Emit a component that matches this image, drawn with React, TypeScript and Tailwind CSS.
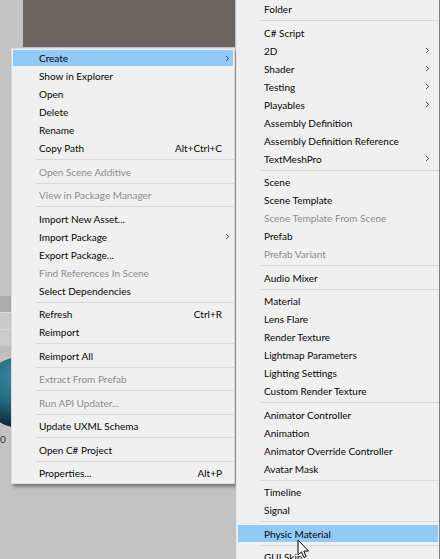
import { ChevronRight } from 'lucide-react';

type MenuEntry =
  | { kind: 'sep' }
  | {
      kind: 'item';
      label: string;
      shortcut?: string;
      sub?: boolean;
      disabled?: boolean;
      active?: boolean;
    };

const sep: MenuEntry = { kind: 'sep' };
const item = (label: string, opts: Partial<Omit<Extract<MenuEntry, { kind: 'item' }>, 'kind' | 'label'>> = {}): MenuEntry => ({
  kind: 'item',
  label,
  ...opts,
});

const assetMenu: MenuEntry[] = [
  item('Create', { sub: true, active: true }),
  item('Show in Explorer'),
  item('Open'),
  item('Delete'),
  item('Rename'),
  item('Copy Path', { shortcut: 'Alt+Ctrl+C' }),
  sep,
  item('Open Scene Additive', { disabled: true }),
  sep,
  item('View in Package Manager', { disabled: true }),
  sep,
  item('Import New Asset...'),
  item('Import Package', { sub: true }),
  item('Export Package...'),
  item('Find References In Scene', { disabled: true }),
  item('Select Dependencies'),
  sep,
  item('Refresh', { shortcut: 'Ctrl+R' }),
  item('Reimport'),
  sep,
  item('Reimport All'),
  sep,
  item('Extract From Prefab', { disabled: true }),
  sep,
  item('Run API Updater...', { disabled: true }),
  sep,
  item('Update UXML Schema'),
  sep,
  item('Open C# Project'),
  sep,
  item('Properties...', { shortcut: 'Alt+P' }),
];

const createMenu: MenuEntry[] = [
  item('Folder'),
  sep,
  item('C# Script'),
  item('2D', { sub: true }),
  item('Shader', { sub: true }),
  item('Testing', { sub: true }),
  item('Playables', { sub: true }),
  item('Assembly Definition'),
  item('Assembly Definition Reference'),
  item('TextMeshPro', { sub: true }),
  sep,
  item('Scene'),
  item('Scene Template'),
  item('Scene Template From Scene', { disabled: true }),
  item('Prefab'),
  item('Prefab Variant', { disabled: true }),
  sep,
  item('Audio Mixer'),
  sep,
  item('Material'),
  item('Lens Flare'),
  item('Render Texture'),
  item('Lightmap Parameters'),
  item('Lighting Settings'),
  item('Custom Render Texture'),
  sep,
  item('Animator Controller'),
  item('Animation'),
  item('Animator Override Controller'),
  item('Avatar Mask'),
  sep,
  item('Timeline'),
  item('Signal'),
  sep,
  item('Physic Material', { active: true }),
  sep,
  item('GUI Skin'),
];

const MenuList = ({ entries, arrowClass }: { entries: MenuEntry[]; arrowClass: string }) => (
  <div className="flex flex-col">
    {entries.map((e, i) =>
      e.kind === 'sep' ? (
        <div key={i} className="h-[5.5px] flex items-center pl-[24px]">
          <div className="h-px w-full bg-[#d7d7d7]" />
        </div>
      ) : (
        <div key={i} className="h-[18px] flex items-center px-px">
          <div
            className={`flex-1 h-[16.5px] flex items-center pl-[26px] pr-[11px] ${
              e.active ? 'bg-[#91c9f7]' : ''
            } ${e.disabled ? 'text-[#8d8d8d]' : 'text-[#050505]'}`}
          >
            <span className="flex-1 whitespace-nowrap">{e.label}</span>
            {e.shortcut && <span className="whitespace-nowrap">{e.shortcut}</span>}
            {e.sub && <ChevronRight size={9} strokeWidth={2.6} className={`text-[#333] ${arrowClass}`} />}
          </div>
        </div>
      )
    )}
  </div>
);

const Cursor = () => (
  <svg width="13" height="20" viewBox="0 0 13 20" className="absolute left-[297px] top-[539px]">
    <path
      d="M1 1 L1 16 L4.5 12.8 L7 18.5 L9.2 17.5 L6.8 12 L11.5 12 Z"
      fill="#ffffff"
      stroke="#000000"
      strokeWidth="1"
      strokeLinejoin="round"
    />
  </svg>
);

export default function App() {
  return (
    <div className="relative w-[440px] h-[559px] overflow-hidden bg-[#c3c3c3] flex text-[10px] font-['Lato','Noto_Sans',sans-serif] leading-none">
      {/* editor behind the menus */}
      <div className="w-[23px] flex flex-col overflow-visible">
        <div className="h-[296px] bg-[#c5c5c5]" />
        <div className="h-[16px] bg-[#ababab]" />
        <div className="h-px bg-[#dcdcdc]" />
        <div className="h-[16px] bg-[#cacaca]" />
        <div className="h-px bg-[#dadada]" />
        <div className="h-[16px] bg-[#cbcbcb]" />
        <div className="h-[10px] bg-[#bdbdbd]" />
        <div className="relative h-[72px]">
          <div className="absolute -left-[16px] top-px w-[71px] h-[71px] rounded-full bg-[radial-gradient(circle_at_45%_28%,#3b8ea6_0%,#246a80_40%,#123645_70%,#0b0b0b_95%)]" />
        </div>
        <div className="pt-[6px] text-[#333] text-[10px]">0</div>
      </div>
      <div className="w-[212px] h-[47px] bg-[#6b6360]" />

      {/* context menu */}
      <div className="absolute left-[11px] top-[48px] w-[224px] bg-[#f0f0f0] border border-[#dcdcdc] pb-px shadow-[2px_3px_3px_rgba(0,0,0,0.35)]">
        <MenuList entries={assetMenu} arrowClass="-mr-[10px]" />
      </div>

      {/* create submenu */}
      <div className="absolute left-[236px] top-0 w-[204px] h-[559px] bg-[#f0f0f0] border-l border-[#e6e6e6] border-r border-r-[#7d7d7d]">
        <MenuList entries={createMenu} arrowClass="-mr-[5px]" />
      </div>

      <Cursor />
    </div>
  );
}
